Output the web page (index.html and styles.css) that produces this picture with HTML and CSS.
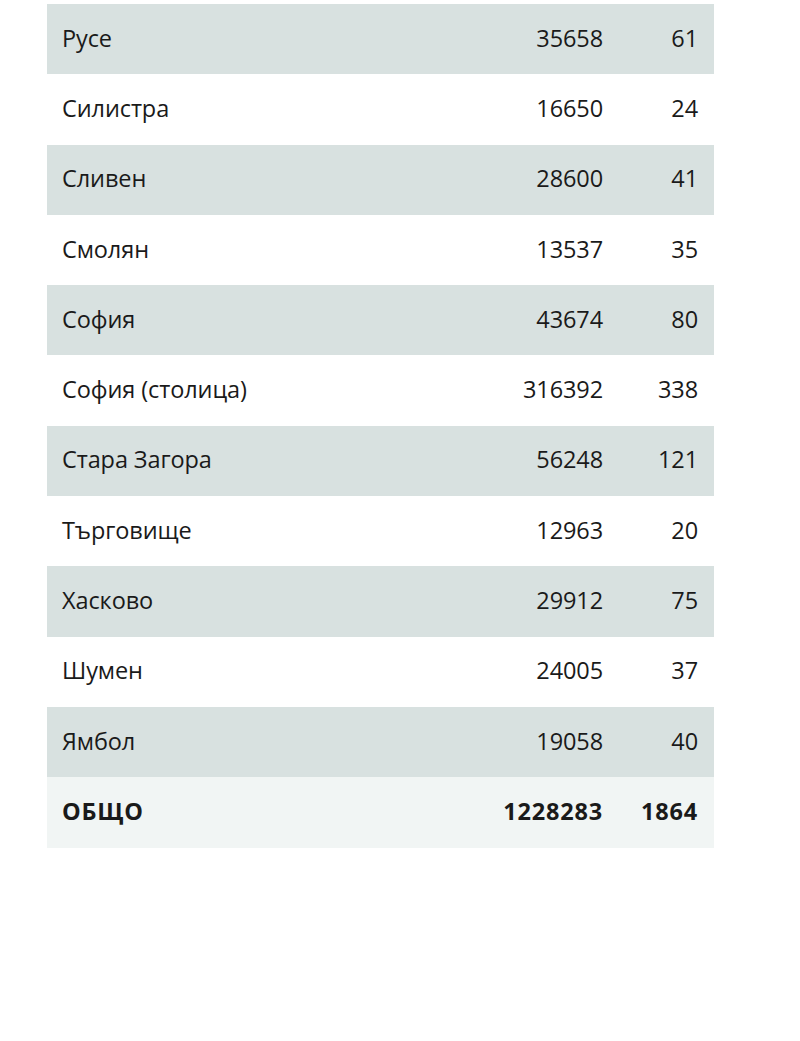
FILE: index.html
```html
<!DOCTYPE html>
<html lang="bg">
<head>
<meta charset="utf-8">
<link rel="stylesheet" href="styles.css">
</head>
<body>
<table class="stats">
  <tbody>
    <tr class="odd"><td class="name">Русе</td><td class="num">35658</td><td class="cnt">61</td></tr>
    <tr><td class="name">Силистра</td><td class="num">16650</td><td class="cnt">24</td></tr>
    <tr class="odd"><td class="name">Сливен</td><td class="num">28600</td><td class="cnt">41</td></tr>
    <tr><td class="name">Смолян</td><td class="num">13537</td><td class="cnt">35</td></tr>
    <tr class="odd"><td class="name">София</td><td class="num">43674</td><td class="cnt">80</td></tr>
    <tr><td class="name">София (столица)</td><td class="num">316392</td><td class="cnt">338</td></tr>
    <tr class="odd"><td class="name">Стара Загора</td><td class="num">56248</td><td class="cnt">121</td></tr>
    <tr><td class="name">Търговище</td><td class="num">12963</td><td class="cnt">20</td></tr>
    <tr class="odd"><td class="name">Хасково</td><td class="num">29912</td><td class="cnt">75</td></tr>
    <tr><td class="name">Шумен</td><td class="num">24005</td><td class="cnt">37</td></tr>
    <tr class="odd"><td class="name">Ямбол</td><td class="num">19058</td><td class="cnt">40</td></tr>
  </tbody>
  <tfoot>
    <tr class="total"><td class="name">ОБЩО</td><td class="num">1228283</td><td class="cnt">1864</td></tr>
  </tfoot>
</table>
</body>
</html>
```

FILE: styles.css
```css
html, body {
  margin: 0;
  padding: 0;
  background: #ffffff;
}

body {
  font-family: "Open Sans", "Noto Sans", sans-serif;
  font-size: 23.5px;
  color: #1a1a1a;
  letter-spacing: -0.1px;
}

.stats {
  margin: 4px 0 0 47px;
  width: 667px;
  border-collapse: collapse;
}

.stats td {
  height: 70.3px;
  padding: 0 15px 3px;
  vertical-align: middle;
  box-sizing: border-box;
}

.stats tr.odd {
  background: #d8e1e0;
}

.stats tr.total {
  background: #f1f5f4;
  font-weight: 700;
  letter-spacing: 0.8px;
}

.stats .name {
  text-align: left;
  padding-left: 15px;
}

.stats .num {
  text-align: right;
  width: 150px;
  padding-right: 15px;
}

.stats .cnt {
  text-align: right;
  width: 96px;
  padding-right: 16px;
}
```
